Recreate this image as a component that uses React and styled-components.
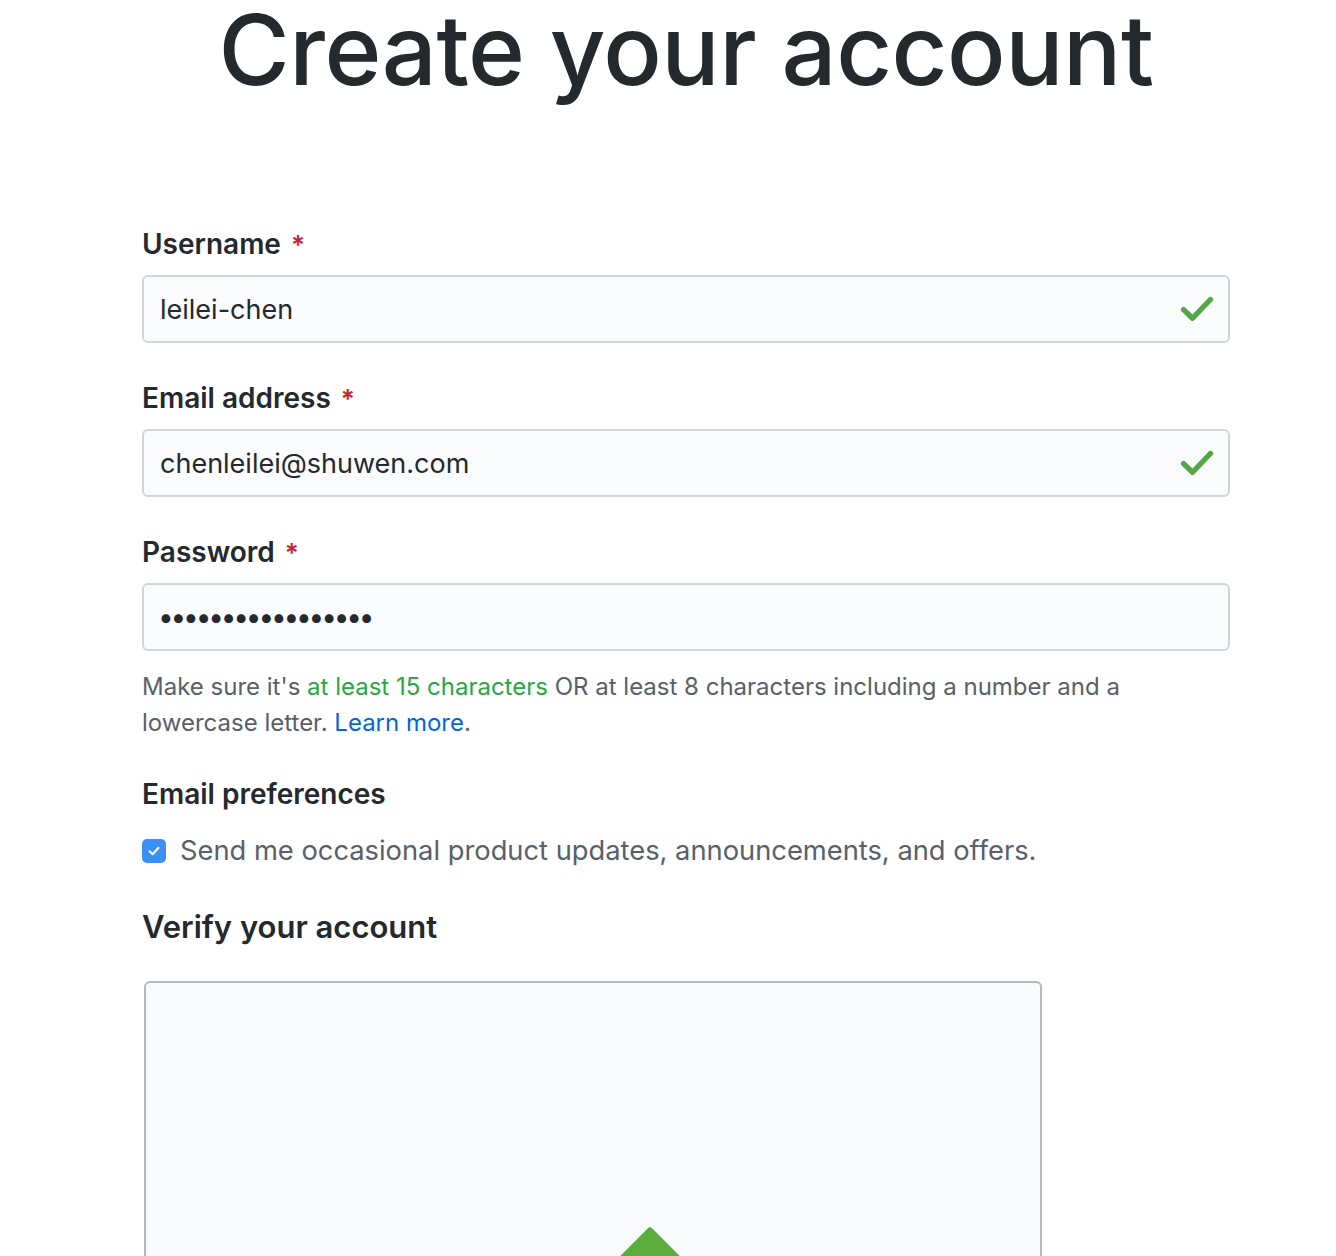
import React, { useState } from 'react';
import styled, { createGlobalStyle } from 'styled-components';

const GlobalStyle = createGlobalStyle`
  html, body {
    margin: 0;
    padding: 0;
    background: #fff;
  }
  body {
    font-family: Inter, "Noto Sans", "Liberation Sans", sans-serif;
    color: #24292e;
  }
`;

const Page = styled.div`
  width: 1088px;
  padding-left: 142px;
  overflow: hidden;
  height: 1256px;
`;

const Heading = styled.h1`
  margin: 0;
  font-size: 97px;
  font-weight: 500;
  line-height: 100px;
  letter-spacing: -0.5px;
  text-align: center;
  color: #24292e;
`;

const Form = styled.form`
  margin-top: 126px;
  display: flex;
  flex-direction: column;
`;

const Field = styled.div`
  margin-bottom: 37px;
`;

const Label = styled.label`
  display: block;
  font-size: 28px;
  font-weight: 600;
  line-height: 36px;
  margin-bottom: 12px;
  color: #24292e;
`;

const Required = styled.span`
  color: #cb2431;
  margin-left: 10px;
  font-size: 26px;
`;

const InputWrap = styled.div`
  position: relative;
`;

const Input = styled.input`
  box-sizing: border-box;
  width: 100%;
  height: 68px;
  padding: 0 70px 0 16px;
  font-family: inherit;
  font-size: ${p => (p.type === 'password' ? '28px' : '27px')};
  color: #24292e;
  background: #fafbfc;
  border: 2px solid #d1d5da;
  border-radius: 6px;
  outline: none;
  letter-spacing: ${p => (p.type === 'password' ? '-3.2px' : '0')};
  padding-left: ${p => (p.type === 'password' ? '14px' : '16px')};
`;

const ValidIcon = styled.svg`
  position: absolute;
  right: 16px;
  top: 50%;
  transform: translateY(-50%);
  width: 34px;
  height: 28px;
`;

const Note = styled.p`
  margin: 18px 0 0;
  font-size: 24px;
  line-height: 36px;
  color: #586069;
  max-width: 1000px;
`;

const Success = styled.span`
  color: #28a745;
`;

const Link = styled.a`
  color: #0366d6;
  text-decoration: none;
`;

const Section = styled.div`
  margin-top: -2px;
`;

const CheckRow = styled.label`
  display: flex;
  align-items: center;
  gap: 14px;
  margin-top: 19px;
  font-size: 27.3px;
  line-height: 40px;
  color: #586069;
`;

const CheckBox = styled.span`
  width: 24px;
  height: 24px;
  border-radius: 5px;
  background: #3b8ff6;
  display: flex;
  align-items: center;
  justify-content: center;
`;

const VerifyTitle = styled.h2`
  margin: 36px 0 34px;
  font-size: 31px;
  font-weight: 600;
  line-height: 40px;
  color: #24292e;
`;

const VerifyBox = styled.div`
  position: relative;
  margin-left: 2px;
  width: 898px;
  height: 400px;
  box-sizing: border-box;
  border: 2px solid #b7b7b7;
  border-radius: 6px;
  background: #f9fafb;
`;

const Diamond = styled.div`
  position: absolute;
  left: 478px;
  top: 254px;
  width: 52px;
  height: 52px;
  background: #5aad3c;
  transform: rotate(45deg);
  border-radius: 3px;
`;

const Check = () => (
  <ValidIcon viewBox="0 0 12 10" fill="none">
    <path d="M1.2 5.2 L4.4 8.3 L10.8 1.6" stroke="#52a742" strokeWidth="1.9" strokeLinecap="round" strokeLinejoin="round" />
  </ValidIcon>
);

export default function App() {
  const [username, setUsername] = useState('leilei-chen');
  const [email, setEmail] = useState('chenleilei@shuwen.com');
  const [password, setPassword] = useState('abcdefghijklmnopq');

  return (
    <Page>
      <GlobalStyle />
      <Heading>Create your account</Heading>
      <Form onSubmit={e => e.preventDefault()}>
        <Field>
          <Label>Username<Required>*</Required></Label>
          <InputWrap>
            <Input value={username} onChange={e => setUsername(e.target.value)} />
            <Check />
          </InputWrap>
        </Field>
        <Field>
          <Label>Email address<Required>*</Required></Label>
          <InputWrap>
            <Input value={email} onChange={e => setEmail(e.target.value)} />
            <Check />
          </InputWrap>
        </Field>
        <Field>
          <Label>Password<Required>*</Required></Label>
          <InputWrap>
            <Input type="password" value={password} onChange={e => setPassword(e.target.value)} />
          </InputWrap>
          <Note>
            Make sure it's <Success>at least 15 characters</Success> OR at least 8 characters including a number and a lowercase letter. <Link href="#">Learn more</Link>.
          </Note>
        </Field>
        <Section>
          <Label>Email preferences</Label>
          <CheckRow>
            <CheckBox>
              <svg width="16" height="16" viewBox="0 0 16 16" fill="none">
                <path d="M3.5 8.3 L6.6 11.2 L12.5 4.8" stroke="#fff" strokeWidth="2" strokeLinecap="round" strokeLinejoin="round" />
              </svg>
            </CheckBox>
            Send me occasional product updates, announcements, and offers.
          </CheckRow>
        </Section>
        <VerifyTitle>Verify your account</VerifyTitle>
        <VerifyBox>
          <Diamond />
        </VerifyBox>
      </Form>
    </Page>
  );
}
